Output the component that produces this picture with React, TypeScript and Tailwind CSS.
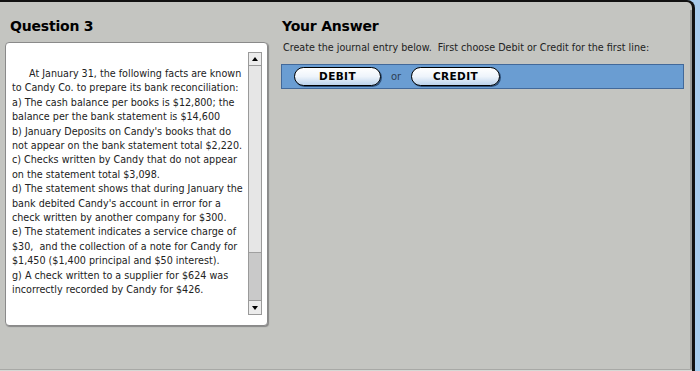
import React from "react";

const facts = [
  "to Candy Co. to prepare its bank reconciliation:",
  "a) The cash balance per books is $12,800; the",
  "balance per the bank statement is $14,600",
  "b) January Deposits on Candy's books that do",
  "not appear on the bank statement total $2,220.",
  "c) Checks written by Candy that do not appear",
  "on the statement total $3,098.",
  "d) The statement shows that during January the",
  "bank debited Candy's account in error for a",
  "check written by another company for $300.",
  "e) The statement indicates a service charge of",
  "$30,  and the collection of a note for Candy for",
  "$1,450 ($1,400 principal and $50 interest).",
  "g) A check written to a supplier for $624 was",
  "incorrectly recorded by Candy for $426.",
];

const PillButton = ({ label, width }: { label: string; width: string }) => (
  <button
    className={`${width} h-[19px] rounded-full border-[1.5px] border-black bg-gradient-to-b from-white via-[#eef4fb] to-[#bcd3ec] shadow-[1px_1px_0_#2e4f78] text-[10.5px] font-extrabold text-black tracking-[0.4px] flex items-center justify-center`}
  >
    {label}
  </button>
);

export default function App() {
  return (
    <div className="w-[700px] h-[371px] bg-[#a9cdee] flex font-['DejaVu_Sans',Verdana,sans-serif] overflow-hidden">
      <div className="w-[695px] h-[371px] bg-[#c4c5c1] border-t-2 border-r-[3px] border-[#111] rounded-tr-[8px] flex relative">
        {/* inner shading on the right edge */}
        <div className="absolute right-0 top-2 bottom-0 w-[2px] bg-[#9a9b98]"></div>
        <div className="absolute left-0 right-0 bottom-0 h-[2px] bg-[#d8d9d6] border-t border-[#a8a9a6]"></div>

        {/* Question column */}
        <div className="w-[263px] ml-[5px] flex flex-col">
          <h2 className="mt-[14px] ml-[5px] text-[14px] leading-[20px] font-extrabold text-black tracking-[-0.2px]">
            Question 3
          </h2>
          <div className="mt-[6px] h-[284px] bg-white border border-[#8a8a8a] rounded-[4px] shadow-[1px_1px_1px_#888] flex">
            <div className="flex-1 pl-[6px] pt-[24px] text-[9.6px] leading-[14.4px] text-[#222]">
              <div className="pl-[17px]">At January 31, the following facts are known</div>
              {facts.map((line) => (
                <div key={line} className="whitespace-pre">
                  {line}
                </div>
              ))}
            </div>
            {/* scrollbar */}
            <div className="w-[14px] mr-[5px] mt-[9px] mb-[10px] border border-[#9a9a9a] bg-[#c9c9c9] flex flex-col">
              <div className="h-[13px] bg-[#ececec] border-b border-[#9a9a9a] flex items-center justify-center">
                <div className="w-0 h-0 border-l-[3px] border-r-[3px] border-b-[4px] border-l-transparent border-r-transparent border-b-black"></div>
              </div>
              <div className="h-[187px] bg-[#e6e6e6] border-b border-[#a0a0a0]"></div>
              <div className="flex-1"></div>
              <div className="h-[14px] bg-[#ececec] border-t border-[#9a9a9a] flex items-center justify-center">
                <div className="w-0 h-0 border-l-[3px] border-r-[3px] border-t-[4px] border-l-transparent border-r-transparent border-t-black"></div>
              </div>
            </div>
          </div>
        </div>

        {/* Answer column */}
        <div className="ml-[13px] flex flex-col">
          <h2 className="mt-[14px] ml-[1px] text-[14px] leading-[20px] font-extrabold text-black tracking-[-0.2px]">
            Your Answer
          </h2>
          <p className="mt-[6px] ml-[2px] text-[9.6px] leading-[12px] text-[#222] whitespace-pre">
            Create the journal entry below.  First choose Debit or Credit for the first line:
          </p>
          <div className="mt-[10px] w-[403px] h-[25px] bg-[#6a9dd2] border border-[#42699a] flex items-center pl-[12px] gap-[3px]">
            <PillButton label="DEBIT" width="w-[87px]" />
            <span className="w-[24px] text-center text-[10px] text-[#2c3e55]">or</span>
            <PillButton label="CREDIT" width="w-[89px]" />
          </div>
        </div>
      </div>
    </div>
  );
}
